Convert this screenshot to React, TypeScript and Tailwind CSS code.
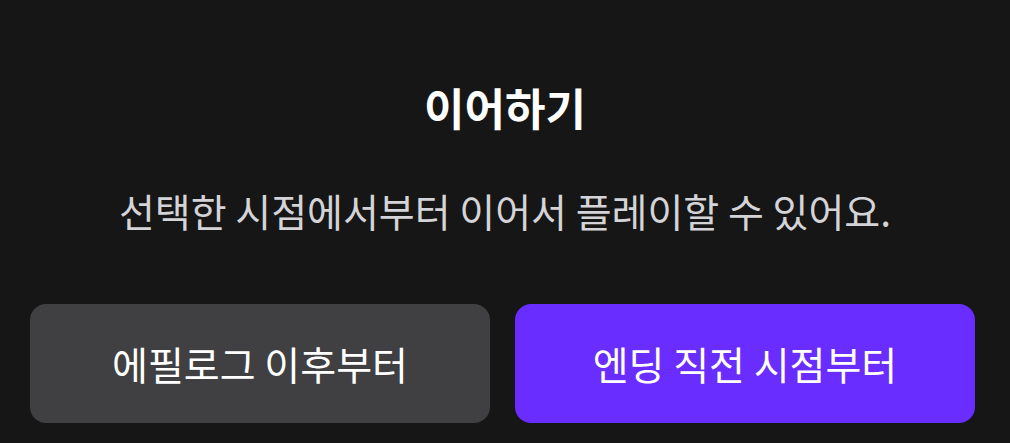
const font = { fontFamily: '"Noto Sans CJK KR", "Noto Sans", sans-serif' };

export default function App() {
  return (
    <div
      className="w-[1010px] h-[443px] bg-[#161616] flex flex-col items-center overflow-hidden"
      style={font}
    >
      <h1 className="mt-[80px] text-[44px] leading-[54px] font-semibold text-white">이어하기</h1>
      <p className="mt-[51px] text-[39px] leading-[50px] text-[#d4d4d8]">
        선택한 시점에서부터 이어서 플레이할 수 있어요.
      </p>
      <div className="mt-[69px] w-full pl-[30px] pr-[35px] grid grid-cols-2 gap-[25px]">
        <button className="h-[119px] rounded-[16px] bg-[#404042] text-white text-[39px] font-normal">
          에필로그 이후부터
        </button>
        <button className="h-[119px] rounded-[16px] bg-[#6a2dff] text-white text-[39px] font-normal">
          엔딩 직전 시점부터
        </button>
      </div>
    </div>
  );
}
